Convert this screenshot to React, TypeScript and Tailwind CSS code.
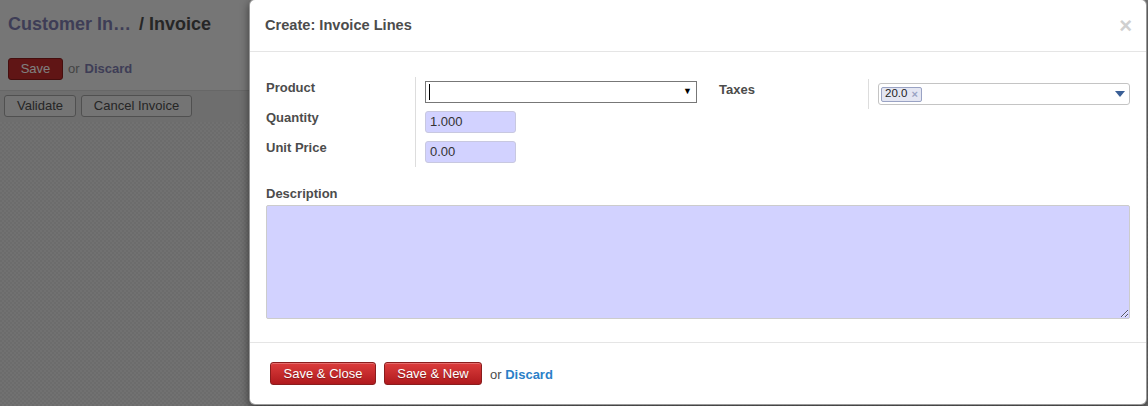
import React from 'react';

const font = { fontFamily: '"Liberation Sans", Arial, sans-serif' };

const FieldLabel: React.FC<{ text: string }> = ({ text }) => (
  <div className="w-[150px] shrink-0 border-r border-[#ddd] pt-[3px] text-[13px] font-bold leading-[16px] text-[#4c4c4c]">
    {text}
  </div>
);

const NumberInput: React.FC<{ value: string }> = ({ value }) => (
  <div className="mt-[4px] ml-[9px] flex h-[22px] w-[91px] items-center rounded-[3px] border border-[#c8c8e0] bg-[#d2d2ff] px-[4px] text-[13px] text-[#333]">
    {value}
  </div>
);

const RedButton: React.FC<{ label: string; className?: string }> = ({ label, className = '' }) => (
  <button
    className={`h-[23px] rounded-[3px] border border-[#8a1d1d] bg-gradient-to-b from-[#dc3c3c] to-[#b0191d] pt-[1px] text-[13px] text-white shadow-[inset_0_1px_0_rgba(255,255,255,0.25)] ${className}`}
    style={{ textShadow: '0 1px 1px rgba(0,0,0,0.3)' }}
  >
    {label}
  </button>
);

const App: React.FC = () => {
  return (
    <div className="relative h-[406px] w-[1148px] overflow-hidden" style={font}>
      {/* page behind the dialog */}
      <div className="flex h-full flex-col">
        <div className="h-[90px] bg-[#ececec] px-[8px]">
          <div className="pt-[13px] text-[18px] font-bold leading-[22px]">
            <span className="text-[#7c7bad]">Customer In…</span>
            <span className="ml-[8px] text-[#4c4c4c]">/ Invoice</span>
          </div>
          <div className="mt-[23px] flex items-center gap-[5px] text-[13px]">
            <div className="flex h-[22px] w-[55px] items-center justify-center rounded-[3px] border border-[#8a1d1d] bg-[#c02a2a] text-white">
              Save
            </div>
            <span className="text-[#888]">or</span>
            <span className="font-bold text-[#7c7bad]">Discard</span>
          </div>
        </div>
        <div className="flex h-[32px] items-center gap-[5px] border-t border-[#cfcfcf] bg-[#dcdcdc] px-[4px] pb-[2px] text-[13px] text-[#4c4c4c]">
          <div className="flex h-[22px] w-[72px] items-center justify-center rounded-[3px] border border-[#a0a0a0] bg-[#e8e8e8]">Validate</div>
          <div className="flex h-[22px] w-[111px] items-center justify-center rounded-[3px] border border-[#a0a0a0] bg-[#e8e8e8]">Cancel Invoice</div>
        </div>
        <div className="flex-1 bg-[repeating-conic-gradient(#d8d8d8_0%_25%,#e2e2e2_0%_50%)] bg-[length:4px_4px]" />
      </div>

      {/* backdrop */}
      <div className="absolute inset-0 bg-black/50" />

      {/* dialog */}
      <div className="absolute top-[-1px] left-[249px] flex h-[406px] w-[898px] flex-col rounded-[6px] border border-black/40 bg-white shadow-[0_3px_9px_rgba(0,0,0,0.5)]">
        <div className="flex h-[52px] shrink-0 items-center justify-between border-b border-[#e5e5e5] pl-[15px] pr-[14px]">
          <h4 className="text-[14.6px] font-bold text-[#4c4c4c]">Create: Invoice Lines</h4>
          <span className="text-[22px] font-bold leading-none text-[#d0d0d0]">×</span>
        </div>

        <div className="px-[16px] pt-[25px] pb-[23px]">
          <div className="flex">
            {/* left group */}
            <div className="flex w-[453px] flex-col">
              <div className="flex h-[30px]">
                <FieldLabel text="Product" />
                <div className="relative mt-[4px] ml-[9px] flex h-[22px] w-[272px] items-center border border-[#777] bg-white pl-[3px]">
                  <span className="h-[16px] w-px bg-black" />
                  <span className="absolute right-[4px] text-[9px] text-black">▼</span>
                </div>
              </div>
              <div className="flex h-[30px]">
                <FieldLabel text="Quantity" />
                <NumberInput value="1.000" />
              </div>
              <div className="flex h-[30px]">
                <FieldLabel text="Unit Price" />
                <NumberInput value="0.00" />
              </div>
            </div>
            {/* right group */}
            <div className="mt-[2px] flex h-[30px] flex-1">
              <FieldLabel text="Taxes" />
              <div className="relative mt-[4px] ml-[9px] flex h-[22px] flex-1 items-center rounded-[3px] border border-[#c4c4c4] bg-white pl-[2px]">
                <div className="flex h-[15px] items-center gap-[4px] rounded-[2px] border border-[#9aa3c4] bg-[#e4e6f2] px-[3px] text-[11.5px] text-[#222]">
                  20.0
                  <span className="text-[11px] font-bold text-[#9aa3c4]">×</span>
                </div>
                <svg className="absolute right-[4px]" width="10" height="6" viewBox="0 0 10 6">
                  <path d="M0 0h10L5 6z" fill="#3a5f96" />
                </svg>
              </div>
            </div>
          </div>

          <div className="mt-[19px] text-[13px] font-bold leading-[16px] text-[#4c4c4c]">Description</div>
          <textarea
            className="mt-[3px] block h-[114px] w-full resize-y rounded-[2px] border border-[#ccc] bg-[#d2d2ff] outline-none"
            defaultValue=""
          />
        </div>

        <div className="flex flex-1 items-start gap-[8px] border-t border-[#e5e5e5] pt-[19px] pl-[20px]">
          <RedButton label="Save & Close" className="w-[106px]" />
          <RedButton label="Save & New" className="w-[98px]" />
          <span className="mt-[3px] text-[13px] text-[#4c4c4c]">
            or <span className="font-bold text-[#2a80c8]">Discard</span>
          </span>
        </div>
      </div>
    </div>
  );
};

export default App;
